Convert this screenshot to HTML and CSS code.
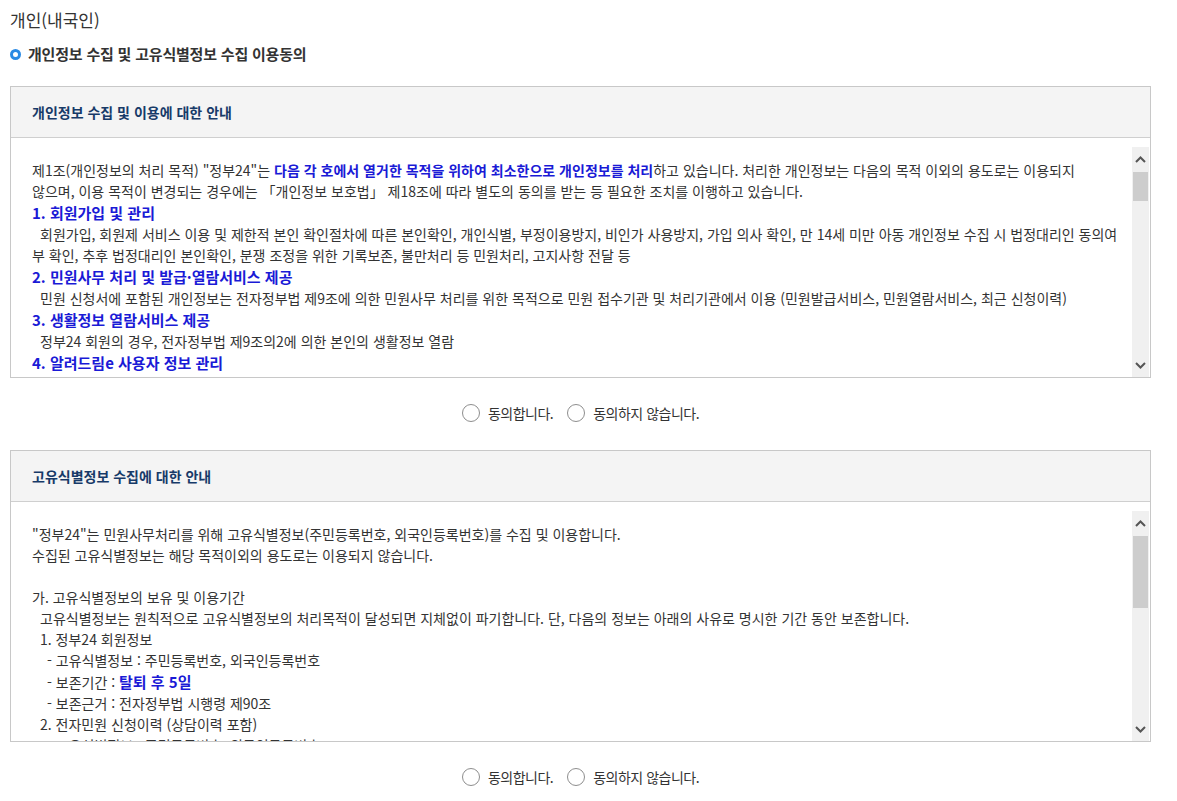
FILE: index.html
```html
<!DOCTYPE html>
<html lang="ko">
<head>
  <meta charset="UTF-8">
  <meta name="viewport" content="width=device-width, initial-scale=1.0">
  <title>개인(내국인) 이용동의</title>
  <link rel="stylesheet" href="styles.css">
</head>
<body>
  <div class="page">
    <h2 class="page-title">개인(내국인)</h2>
    <h3 class="sub-title"><span class="dot"></span>개인정보 수집 및 고유식별정보 수집 이용동의</h3>

    <div class="agree-box">
      <div class="agree-head">개인정보 수집 및 이용에 대한 안내</div>
      <div class="agree-body">
        <div class="scroll-text">
          <p class="intro">제1조(개인정보의 처리 목적) "정부24"는 <strong class="em em-sm">다음 각 호에서 열거한 목적을 위하여 최소한으로 개인정보를 처리</strong>하고 있습니다. 처리한 개인정보는 다음의 목적 이외의 용도로는 이용되지 않으며, 이용 목적이 변경되는 경우에는 「개인정보 보호법」 제18조에 따라 별도의 동의를 받는 등 필요한 조치를 이행하고 있습니다.</p>
          <p class="item">1. 회원가입 및 관리</p>
          <p class="desc">회원가입, 회원제 서비스 이용 및 제한적 본인 확인절차에 따른 본인확인, 개인식별, 부정이용방지, 비인가 사용방지, 가입 의사 확인, 만 14세 미만 아동 개인정보 수집 시 법정대리인 동의여부 확인, 추후 법정대리인 본인확인, 분쟁 조정을 위한 기록보존, 불만처리 등 민원처리, 고지사항 전달 등</p>
          <p class="item">2. 민원사무 처리 및 발급·열람서비스 제공</p>
          <p class="desc">민원 신청서에 포함된 개인정보는 전자정부법 제9조에 의한 민원사무 처리를 위한 목적으로 민원 접수기관 및 처리기관에서 이용 (민원발급서비스, 민원열람서비스, 최근 신청이력)</p>
          <p class="item">3. 생활정보 열람서비스 제공</p>
          <p class="desc">정부24 회원의 경우, 전자정부법 제9조의2에 의한 본인의 생활정보 열람</p>
          <p class="item">4. 알려드림e 사용자 정보 관리</p>
          <p class="desc">알려드림e 서비스 신청 회원의 경우, 알림 발송 및 사용자 설정 정보 관리</p>
        </div>
        <div class="scrollbar">
          <span class="sb-btn"><svg width="11" height="7" viewBox="0 0 11 7"><path d="M1 6 L5.5 1.5 L10 6" fill="none" stroke="#555" stroke-width="2"/></svg></span>
          <span class="sb-thumb"></span>
          <span class="sb-track"></span>
          <span class="sb-btn"><svg width="11" height="7" viewBox="0 0 11 7"><path d="M1 1 L5.5 5.5 L10 1" fill="none" stroke="#555" stroke-width="2"/></svg></span>
        </div>
      </div>
    </div>

    <div class="agree-radio">
      <label class="radio"><span class="circle"></span>동의합니다.</label>
      <label class="radio"><span class="circle"></span>동의하지 않습니다.</label>
    </div>

    <div class="agree-box">
      <div class="agree-head">고유식별정보 수집에 대한 안내</div>
      <div class="agree-body">
        <div class="scroll-text">
          <p>"정부24"는 민원사무처리를 위해 고유식별정보(주민등록번호, 외국인등록번호)를 수집 및 이용합니다.</p>
          <p>수집된 고유식별정보는 해당 목적이외의 용도로는 이용되지 않습니다.</p>
          <p class="blank"></p>
          <p>가. 고유식별정보의 보유 및 이용기간</p>
          <p class="lv1">고유식별정보는 원칙적으로 고유식별정보의 처리목적이 달성되면 지체없이 파기합니다. 단, 다음의 정보는 아래의 사유로 명시한 기간 동안 보존합니다.</p>
          <p class="lv1">1. 정부24 회원정보</p>
          <p class="lv2">- 고유식별정보 : 주민등록번호, 외국인등록번호</p>
          <p class="lv2">- 보존기간 : <strong class="em">탈퇴 후 5일</strong></p>
          <p class="lv2">- 보존근거 : 전자정부법 시행령 제90조</p>
          <p class="lv1">2. 전자민원 신청이력 (상담이력 포함)</p>
          <p class="lv2">- 고유식별정보 : 주민등록번호, 외국인등록번호</p>
          <p class="lv2">- 보존기간 : 5년</p>
        </div>
        <div class="scrollbar">
          <span class="sb-btn"><svg width="11" height="7" viewBox="0 0 11 7"><path d="M1 6 L5.5 1.5 L10 6" fill="none" stroke="#555" stroke-width="2"/></svg></span>
          <span class="sb-thumb long"></span>
          <span class="sb-track"></span>
          <span class="sb-btn"><svg width="11" height="7" viewBox="0 0 11 7"><path d="M1 1 L5.5 5.5 L10 1" fill="none" stroke="#555" stroke-width="2"/></svg></span>
        </div>
      </div>
    </div>

    <div class="agree-radio">
      <label class="radio"><span class="circle"></span>동의합니다.</label>
      <label class="radio"><span class="circle"></span>동의하지 않습니다.</label>
    </div>
  </div>
</body>
</html>
```

FILE: styles.css
```css
body {
  margin: 0;
  padding: 0;
  background: #fff;
  color: #333;
  font-family: "Noto Sans CJK KR", "Noto Sans", sans-serif;
  font-size: 14px;
}
.page {
  width: 1141px;
  padding: 9px 0 0 10px;
}
.page-title {
  margin: 0;
  font-size: 17px;
  font-weight: normal;
  line-height: 22px;
  color: #333;
}
.sub-title {
  display: flex;
  align-items: center;
  margin: 13px 0 0;
  font-size: 15px;
  line-height: 20px;
  font-weight: bold;
  color: #333;
  letter-spacing: -0.2px;
}
.dot {
  width: 11px;
  height: 11px;
  box-sizing: border-box;
  border: 3px solid #2a8ae4;
  border-radius: 50%;
  margin-right: 7px;
}
.agree-box {
  margin-top: 22px;
  border: 1px solid #c8c8c8;
}
.agree-box + .agree-radio + .agree-box {
  margin-top: 0;
}
.agree-head {
  height: 50px;
  line-height: 50px;
  padding-left: 21px;
  background: #f4f4f4;
  border-bottom: 1px solid #cfcfcf;
  font-weight: bold;
  font-size: 14px;
  color: #173a68;
}
.agree-body {
  display: flex;
  height: 230px;
  padding-top: 9px;
  overflow: hidden;
}
.scroll-text {
  flex: 1;
  padding: 13px 11px 0 21px;
  overflow: hidden;
}
.scroll-text p {
  margin: 0;
  line-height: 21px;
}
.scroll-text .intro {
  word-break: keep-all;
}
.scroll-text .item {
  font-size: 15px;
  font-weight: bold;
  color: #1a1ad6;
  line-height: 22px;
}
.scroll-text .em {
  font-size: 15px;
  color: #1a1ad6;
}
.scroll-text .em-sm {
  font-size: 14px;
}
.scroll-text .desc {
  text-indent: 8px;
}
.scroll-text .blank {
  height: 21px;
}
.scroll-text .lv1 {
  padding-left: 8px;
}
.scroll-text .lv2 {
  padding-left: 15px;
}
.scrollbar {
  display: flex;
  flex-direction: column;
  width: 17px;
  margin-right: 1px;
  background: #f0f0f0;
}
.sb-btn {
  display: flex;
  align-items: center;
  justify-content: center;
  height: 24px;
}
.sb-thumb {
  height: 29px;
  margin: 1px 1px 0;
  background: #cdcdcd;
}
.sb-thumb.long {
  height: 72px;
}
.sb-track {
  flex: 1;
}
.agree-radio {
  display: flex;
  justify-content: center;
  gap: 14px;
  padding: 24px 0 26px;
  line-height: 22px;
}
.radio {
  display: flex;
  align-items: center;
  font-size: 14px;
  color: #333;
  letter-spacing: -0.5px;
}
.circle {
  width: 18px;
  height: 18px;
  box-sizing: border-box;
  border: 1px solid #8e8e8e;
  border-radius: 50%;
  background: #fff;
  margin-right: 8px;
}
```
